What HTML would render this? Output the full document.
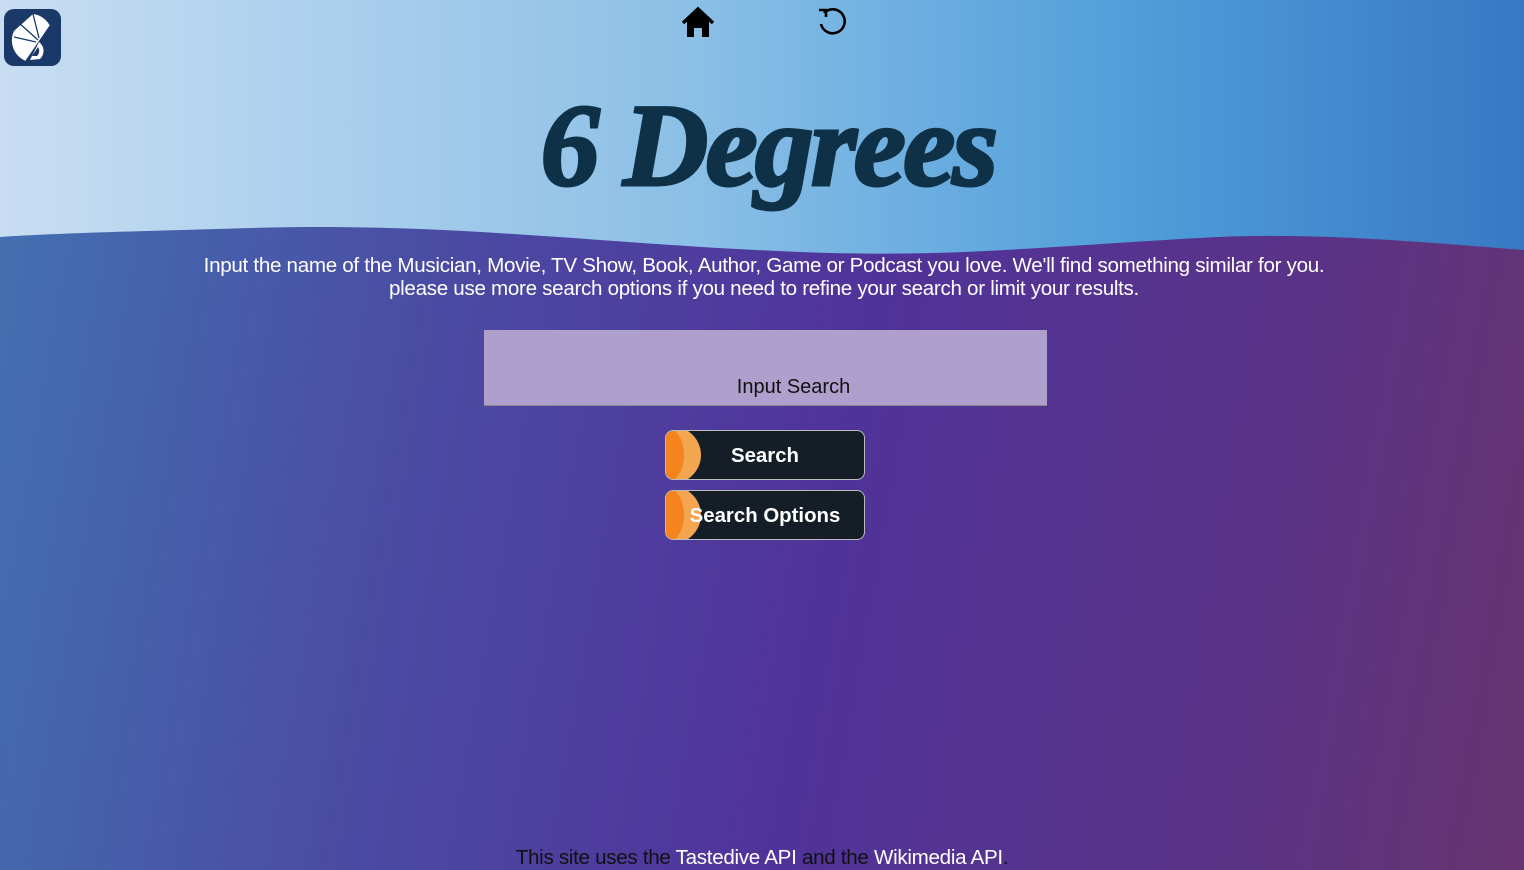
<!DOCTYPE html>
<html><head><style>
html,body{margin:0;padding:0;width:1524px;height:870px;overflow:hidden;font-family:"Liberation Sans",Arial,sans-serif}
body{position:relative;background:linear-gradient(100deg,#4273b2 0%,#4b4aa3 30%,#50339a 55%,#5a3388 80%,#65336f 100%)}
#top{position:absolute;left:0;top:0;width:1524px;height:260px}
.title{position:absolute;left:0;width:1524px;top:78px;text-align:center;font-family:"Liberation Serif",serif;font-style:italic;font-weight:bold;font-size:118px;color:#0f3147;letter-spacing:-3px;transform:translateX(6px);-webkit-text-stroke:3px #0f3147}
.desc{position:absolute;top:254px;width:1524px;left:2px;text-align:center;color:#fff;font-size:20.6px;line-height:23px;letter-spacing:-0.3px}
.inp{position:absolute;left:484px;top:330px;width:563px;height:75px;background:#ae9fcc;border-bottom:1px solid #888}
.inp span{position:absolute;left:0;right:-56px;top:46px;text-align:center;font-size:20px;color:#111}
.btn{position:absolute;left:665px;width:198px;height:48px;border:1px solid #bbb;border-radius:8px;background:#151d27;overflow:hidden;color:#fff;font-weight:bold;font-size:20.4px;line-height:51px;text-align:center}
.btn:before{content:"";position:absolute;left:-30px;top:-6px;width:65px;height:60px;border-radius:50%;background:#f4a550}
.btn:after{content:"";position:absolute;left:-18px;top:-4px;width:36px;height:56px;border-radius:50%;background:#f5841e}
.btn span{position:relative;z-index:2}
.foot{position:absolute;top:846px;width:1524px;text-align:center;font-size:20.6px;color:#111;letter-spacing:-0.3px}
.foot b{font-weight:normal;color:#fff}
</style></head><body>
<svg id="top" viewBox="0 0 1524 260" preserveAspectRatio="none">
<defs><linearGradient id="g" x1="0" x2="1" y1="0" y2="0">
<stop offset="0" stop-color="#c8ddf2"/><stop offset="0.45" stop-color="#8cc0e6"/><stop offset="0.75" stop-color="#4e9dda"/><stop offset="1" stop-color="#3878c3"/></linearGradient></defs>
<path d="M0 0H1524V250C1400 240 1300 232 1200 238C1050 246 950 258 800 252C600 244 450 222 250 228C150 231 60 233 0 237Z" fill="url(#g)"/>
</svg>
<svg style="position:absolute;left:4px;top:9px" width="57" height="57" viewBox="0 0 57 57">
<rect x="0" y="0" width="57" height="57" rx="10" fill="#1b3968"/>
<path d="M29 5 A22 22 0 0 1 46 17 L22 52 A22 22 0 0 1 10 22 Z" fill="#fff"/>
<path d="M29 5 L35 29 M15 14 L34 31 M10 28 L32 33 M46 17 L22 52" stroke="#1b3968" stroke-width="1.3" fill="none"/>
<path d="M35 33 A11 11 0 0 1 36 50 L26 51 Z" fill="#fff"/>
<path d="M34 38 A7 7 0 0 1 33 47 L28 47 Z" fill="#1b3968"/>
</svg>
<svg style="position:absolute;left:681px;top:6px" width="34" height="32" viewBox="0 0 34 32">
<path d="M2 17 L17 3 L32 17" stroke="#000" stroke-width="3.5" fill="none"/>
<path d="M6 15 L17 5 L28 15 V31 H21 V22 H13 V31 H6Z" fill="#000"/>
</svg>
<svg style="position:absolute;left:816px;top:6px" width="34" height="32" viewBox="0 0 34 32">
<path d="M8 7 A12 12 0 1 1 5 18" stroke="#000" stroke-width="2.6" fill="none"/>
<path d="M3 4 L10 4 L10 11" stroke="#000" stroke-width="2.6" fill="none"/>
</svg>
<div class="title">6 Degrees</div>
<div class="desc">Input the name of the Musician, Movie, TV Show, Book, Author, Game or Podcast you love. We'll find something similar for you.<br>please use more search options if you need to refine your search or limit your results.</div>
<div class="inp"><span>Input Search</span></div>
<div class="btn" style="top:430px"><span>Search</span></div>
<div class="btn" style="top:490px"><span>Search Options</span></div>
<div class="foot">This site uses the <b>Tastedive API</b> and the <b>Wikimedia API</b>.</div>
</body></html>
